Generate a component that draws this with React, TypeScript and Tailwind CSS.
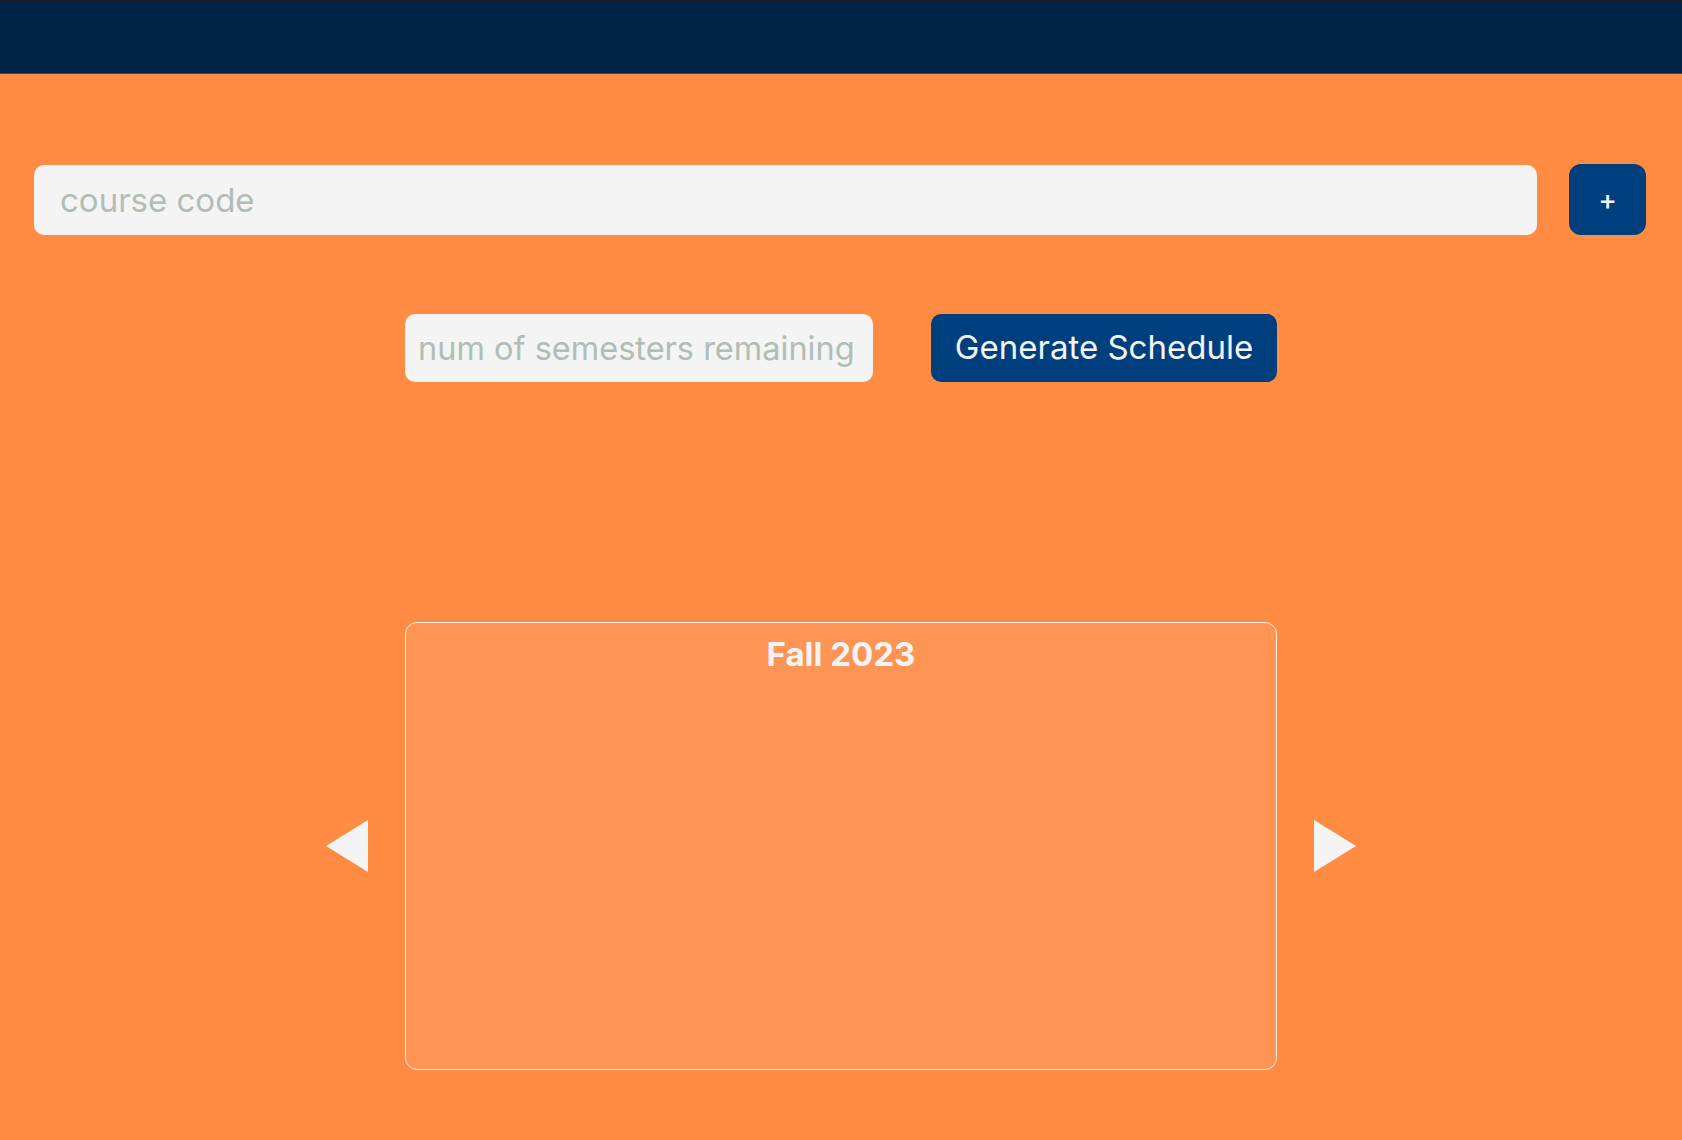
import React from 'react';

const font = { fontFamily: 'Inter, "Noto Sans", sans-serif' };

function Triangle({ dir }: { dir: 'left' | 'right' }) {
  return (
    <button className="shrink-0 w-[42px] h-[52px]" aria-label={dir === 'left' ? 'previous' : 'next'}>
      <svg width="42" height="52" viewBox="0 0 42 52">
        {dir === 'left' ? (
          <polygon points="42,0 42,52 0,26" fill="#f4f4f4" />
        ) : (
          <polygon points="0,0 0,52 42,26" fill="#f4f4f4" />
        )}
      </svg>
    </button>
  );
}

export default function App() {
  return (
    <div className="min-h-[1140px] bg-[#ff8c42] flex flex-col" style={font}>
      <header className="h-[74px] bg-[#002347] border-t-2 border-t-[#1c1c1c] border-b border-b-[#3a4a60]" />

      <div className="flex items-center gap-[32px] pl-[34px] pr-[36px] mt-[90px]">
        <input
          placeholder="course code"
          className="flex-1 h-[70px] rounded-[10px] bg-[#f4f4f4] px-[26px] text-[33px] text-gray-700 placeholder:text-[#b1bdb5] outline-none"
        />
        <button className="w-[77px] h-[71px] rounded-[12px] bg-[#003f7d] text-[#f4f4f4] text-[28px] font-medium flex items-center justify-center">
          +
        </button>
      </div>

      <div className="w-[872px] mx-auto mt-[79px] flex items-center justify-between">
        <input
          placeholder="num of semesters remaining"
          className="w-[468px] h-[68px] rounded-[10px] bg-[#f4f4f4] pl-[13px] pr-[8px] text-[32.5px] text-gray-700 placeholder:text-[#b1bdb5] outline-none"
        />
        <button className="w-[346px] h-[68px] rounded-[10px] bg-[#003f7d] text-[#f4f4f4] text-[33px]">
          Generate Schedule
        </button>
      </div>

      <div className="flex items-center justify-center gap-[37px] mt-[240px]">
        <Triangle dir="left" />
        <div className="w-[872px] h-[448px] rounded-[12px] border border-[#fff0e4] bg-[#ff9555] pt-[12px]">
          <h2 className="text-center text-[33px] font-bold text-[#f4f4f4] leading-[1.2]">Fall 2023</h2>
        </div>
        <Triangle dir="right" />
      </div>
    </div>
  );
}
